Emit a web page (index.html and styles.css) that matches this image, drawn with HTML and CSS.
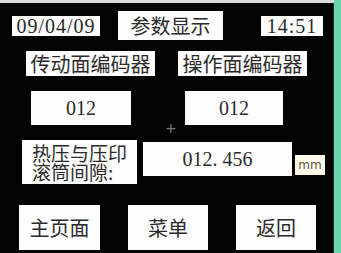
FILE: index.html
```html
<!DOCTYPE html>
<html lang="zh-CN">
<head>
  <meta charset="UTF-8">
  <title>参数显示</title>
  <link rel="stylesheet" href="styles.css">
</head>
<body>

<div class="topbar"></div>

<div class="screen">

  <div class="row row-head">
    <div class="box num date">09/04/09</div>
    <div class="box title">参数显示</div>
    <div class="box num time">14:51</div>
  </div>

  <div class="row row-names">
    <div class="box name">传动面编码器</div>
    <div class="box name name-right">操作面编码器</div>
  </div>

  <div class="row row-values">
    <div class="box num value">012</div>
    <div class="box num value value-right">012</div>
  </div>

  <span class="cursor">+</span>

  <div class="row row-gap">
    <div class="box gap-label">
      <span>热压与压印</span>
      <span>滚筒间隙:</span>
    </div>
    <div class="box num gap-value">012. 456</div>
    <div class="box unit">mm</div>
  </div>

  <div class="row row-buttons">
    <div class="box btn">主页面</div>
    <div class="box btn">菜单</div>
    <div class="box btn">返回</div>
  </div>

</div>

</body>
</html>
```

FILE: styles.css
```css
:root {
  --screen: #030303;
  --box: #fdfdfd;
  --ink: #2b2b2b;
  --edge: #67d6ad;
}

body {
  margin: 0;
  width: 341px;
  height: 253px;
  overflow: hidden;
  background-color: var(--edge);
  font-family: "Noto Sans CJK SC", sans-serif;
  color: var(--ink);
}

.topbar {
  width: 334px;
  height: 3px;
  background-color: #d9dcd9;
}

.screen {
  position: relative;
  width: 334px;
  height: 250px;
  background-color: var(--screen);
  border-right: 1px solid #2a2f2d;
  padding-top: 8px;
  box-sizing: border-box;
}

.row {
  display: flex;
  align-items: center;
}

.box {
  display: flex;
  align-items: center;
  justify-content: center;
  background-color: var(--box);
  font-size: 20px;
  line-height: 20px;
  white-space: nowrap;
}

.num {
  font-family: "Liberation Serif", serif;
}

/* Header row */
.row-head {
  height: 29px;
}

.date {
  width: 88px;
  height: 20px;
  margin-left: 12px;
  letter-spacing: 1px;
}

.title {
  width: 105px;
  height: 29px;
  margin-left: 18px;
}

.time {
  width: 62px;
  height: 20px;
  margin-left: 38px;
  letter-spacing: 1px;
}

/* Encoder names */
.row-names {
  margin-top: 11px;
}

.name {
  width: 129px;
  height: 25px;
  margin-left: 26px;
}

.name-right {
  margin-left: 23px;
}

/* Encoder values */
.row-values {
  margin-top: 15px;
}

.value {
  width: 100px;
  height: 34px;
  margin-left: 31px;
}

.value-right {
  width: 98px;
  margin-left: 54px;
}

.cursor {
  position: absolute;
  left: 165px;
  top: 118px;
  font-family: "DejaVu Sans", sans-serif;
  font-size: 14px;
  line-height: 14px;
  color: #777;
}

/* Roller gap */
.row-gap {
  margin-top: 15px;
  align-items: flex-start;
}

.gap-label {
  width: 115px;
  height: 44px;
  margin-left: 22px;
  flex-direction: column;
  align-items: flex-start;
  justify-content: center;
  padding-left: 10px;
  box-sizing: border-box;
  font-size: 19px;
}

.gap-label span {
  display: block;
  height: 19px;
  line-height: 19px;
}

.gap-value {
  width: 149px;
  height: 34px;
  margin-left: 6px;
  margin-top: 2px;
  white-space: pre;
}

.unit {
  width: 30px;
  height: 20px;
  margin-left: 3px;
  margin-top: 15px;
  background-color: #fffbe9;
  font-family: "DejaVu Sans", sans-serif;
  font-size: 12px;
  color: #555;
}

/* Bottom buttons */
.row-buttons {
  margin-top: 21px;
}

.btn {
  width: 80px;
  height: 45px;
  margin-left: 28px;
}

.btn:first-child {
  width: 81px;
  margin-left: 19px;
}
```
